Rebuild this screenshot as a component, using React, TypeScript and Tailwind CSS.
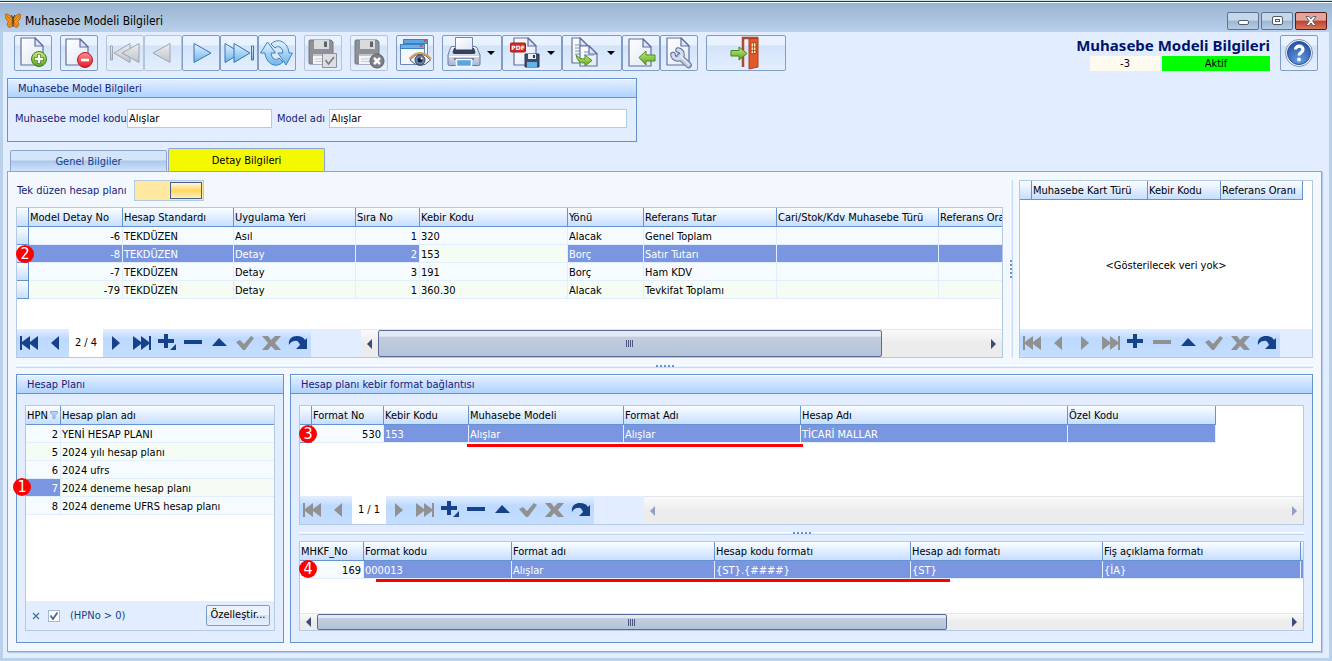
import { useState, type ReactNode } from "react";
import clsx from "clsx";

interface Column {
  title: string;
  width: number;
  align?: "right";
  indicator?: boolean;
  filter?: boolean;
}

interface Row {
  cells: string[];
  // indexes of the cells that carry the selection colour
  selected?: number[];
}

const detailColumns: Column[] = [
  { title: "", width: 12, indicator: true },
  { title: "Model Detay No", width: 94, align: "right" },
  { title: "Hesap Standardı", width: 111 },
  { title: "Uygulama Yeri", width: 122 },
  { title: "Sıra No", width: 64, align: "right" },
  { title: "Kebir Kodu", width: 148 },
  { title: "Yönü", width: 76 },
  { title: "Referans Tutar", width: 133 },
  { title: "Cari/Stok/Kdv Muhasebe Türü", width: 162 },
  { title: "Referans Oranı", width: 110 },
];

const detailRows: Row[] = [
  { cells: ["", "-6", "TEKDÜZEN", "Asıl", "1", "320", "Alacak", "Genel Toplam", "", ""] },
  { cells: ["", "-8", "TEKDÜZEN", "Detay", "2", "153", "Borç", "Satır Tutarı", "", ""], selected: [1, 2, 3, 4, 6, 7, 8, 9] },
  { cells: ["", "-7", "TEKDÜZEN", "Detay", "3", "191", "Borç", "Ham KDV", "", ""] },
  { cells: ["", "-79", "TEKDÜZEN", "Detay", "1", "360.30", "Alacak", "Tevkifat Toplamı", "", ""] },
];

const cardColumns: Column[] = [
  { title: "", width: 12, indicator: true },
  { title: "Muhasebe Kart Türü", width: 116 },
  { title: "Kebir Kodu", width: 73 },
  { title: "Referans Oranı", width: 82 },
];

const planColumns: Column[] = [
  { title: "HPN", width: 35, align: "right", filter: true },
  { title: "Hesap plan adı", width: 214 },
];

const planRows: Row[] = [
  { cells: ["2", "YENİ HESAP PLANI"] },
  { cells: ["5", "2024 yılı hesap planı"] },
  { cells: ["6", "2024 ufrs"] },
  { cells: ["7", "2024 deneme hesap planı"], selected: [0] },
  { cells: ["8", "2024 deneme UFRS hesap planı"] },
];

const linkColumns: Column[] = [
  { title: "", width: 12, indicator: true },
  { title: "Format No", width: 72, align: "right" },
  { title: "Kebir Kodu", width: 85 },
  { title: "Muhasebe Modeli", width: 155 },
  { title: "Format Adı", width: 177 },
  { title: "Hesap Adı", width: 267 },
  { title: "Özel Kodu", width: 148 },
];

const linkRows: Row[] = [
  { cells: ["", "530", "153", "Alışlar", "Alışlar", "TİCARİ MALLAR", ""], selected: [2, 3, 4, 5, 6] },
];

const formatColumns: Column[] = [
  { title: "MHKF_No", width: 64, align: "right" },
  { title: "Format kodu", width: 148 },
  { title: "Format adı", width: 203 },
  { title: "Hesap kodu formatı", width: 196 },
  { title: "Hesap adı formatı", width: 192 },
  { title: "Fiş açıklama formatı", width: 198 },
  { title: "", width: 60 },
];

const formatRows: Row[] = [
  { cells: ["169", "000013", "Alışlar", "{ST}.{####}", "{ST}", "{İA}", ""], selected: [1, 2, 3, 4, 5, 6] },
];

const HEADER_BG = "bg-linear-to-b from-[#fbfdff] to-[#c6deff]";

function DataTable({ label, columns, rows }: { label: string; columns: Column[]; rows: Row[] }) {
  const total = columns.reduce((sum, c) => sum + c.width, 0);

  return (
    <table aria-label={label} className="table-fixed border-separate border-spacing-0" style={{ width: total }}>
      <colgroup>
        {columns.map((c, i) => (
          <col key={i} style={{ width: c.width }} />
        ))}
      </colgroup>
      <thead>
        <tr>
          {columns.map((c, i) => (
            <th
              key={i}
              className={clsx(
                "h-[19px] p-0 pt-0.5 pl-px border-r border-b border-[#6593cf] text-left font-normal leading-4 whitespace-nowrap overflow-hidden",
                HEADER_BG
              )}
            >
              {c.filter ? (
                <span className="flex items-center">
                  {c.title}
                  <svg viewBox="0 0 8 8" className="w-2 h-2 ml-0.5 mb-0.5" aria-hidden="true">
                    <path d="M.5 .5h7v1.500L5 4.500v3H3v-3L.5 2z" fill="#b9d0f0" stroke="#8fabd6" />
                  </svg>
                </span>
              ) : (
                c.title
              )}
            </th>
          ))}
        </tr>
      </thead>
      <tbody>
        {rows.map((row, r) => (
          <tr key={r} className={r % 2 ? "bg-[#f5fcf3]" : "bg-[#f6fbff]"}>
            {row.cells.map((cell, i) => (
              <td
                key={i}
                className={clsx(
                  "h-[18px] p-0 pt-0.5 border-r border-b leading-[15px] whitespace-nowrap overflow-hidden",
                  columns[i].align === "right" ? "text-right pr-0.5" : "pl-px",
                  columns[i].indicator ? ["border-[#6593cf]", HEADER_BG] : "border-[#e2eeff]",
                  row.selected?.includes(i) && "bg-[#7b96e0] text-white"
                )}
              >
                {cell}
              </td>
            ))}
          </tr>
        ))}
      </tbody>
    </table>
  );
}

function Marker({ children, className }: { children: ReactNode; className: string }) {
  return (
    <span
      className={clsx(
        "absolute z-10 w-[18px] h-[18px] rounded-full bg-[#ff0000] text-white text-base leading-[18px] text-center",
        className
      )}
    >
      {children}
    </span>
  );
}

const navIcons: { label: string; path: ReactNode }[] = [
  { label: "İlk", path: <path d="M3 6h2v6l8-6v6l8-6v14l-8-6v6l-8-6v6H3z" /> },
  { label: "Önceki", path: <path d="M16 6v14l-8-7z" /> },
  { label: "Sonraki", path: <path d="M9 6v14l8-7z" /> },
  { label: "Son", path: <path d="M22 6h-2v6l-8-6v6L4 6v14l8-6v6l8-6v6h2z" /> },
  { label: "Ekle", path: <path d="M9 4h4v5h6v4h-6v5H9v-5H3V9h6z" /> },
  { label: "Sil", path: <path d="M3 10h18v4H3z" /> },
  { label: "Düzenle", path: <path d="M5 16l7-8 8 8z" /> },
  { label: "Kaydet", path: <path d="M3 12l4-2 4 4 7-8 3 2-9 12h-2z" /> },
  { label: "Vazgeç", path: <path d="M3 6h6l3 4 4-4h6l-6 7 6 7h-6l-4-4-3 4H3l6-7z" /> },
  { label: "Yenile", path: <path d="M4 15C3 9 7 6 12 6c4 0 6 1 8 4l2-2v11H11l4-4c-1-3-3-5-5-4-3 0-4 1-6 4z" /> },
];

function Navigator({ counter, disabled, corner }: { counter?: string; disabled: number[]; corner?: boolean }) {
  return (
    <div className="flex h-7 shrink-0">
      {navIcons.map((icon, i) => (
        <div key={icon.label} className="contents">
          {i === 2 && counter && <span className="w-[34px] bg-white text-center leading-7">{counter}</span>}
          <button
            aria-label={icon.label}
            disabled={disabled.includes(i)}
            className="w-[26px] h-7 flex items-center justify-center bg-linear-to-b from-[#e3efff] via-[#bdd9ff] via-35% to-[#c4deff]"
          >
            <svg viewBox="0 0 26 26" className={clsx("w-[26px] h-[26px]", disabled.includes(i) ? "fill-[#919191]" : "fill-[#15428b]")}>
              {icon.path}
              {corner && i === 4 && <path d="M21 14v6h-6z" />}
            </svg>
          </button>
        </div>
      ))}
    </div>
  );
}

function ScrollArrow({ flip, faded }: { flip?: boolean; faded?: boolean }) {
  return (
    <button aria-label={flip ? "Sağa kaydır" : "Sola kaydır"} className="w-[17px] shrink-0 flex items-center justify-center">
      <svg viewBox="0 0 5 10" className={clsx("w-[5px] h-2.5", flip && "rotate-180", faded ? "fill-[#92a0c6]" : "fill-[#3d4b75]")}>
        <path d="M5 0v10L0 5z" />
      </svg>
    </button>
  );
}

function ScrollBar({ thumb }: { thumb?: string }) {
  return (
    <div className="flex-1 flex bg-linear-to-b from-[#fafafa] to-[#ececec] to-50% border-t border-[#e3e6ea]">
      <ScrollArrow faded={!thumb} />
      <div className="flex-1 flex">
        {thumb && (
          <div
            className={clsx(
              "border border-[#5a6a96] rounded-xs flex items-center justify-center gap-px bg-linear-to-b from-[#e4eaf1] from-20% via-[#c2cedf] via-25% to-[#b4c3d8]",
              thumb
            )}
          >
            {[0, 1, 2, 3].map((n) => (
              <span key={n} className="w-px h-[7px] bg-[#4a5580]" />
            ))}
          </div>
        )}
      </div>
      <ScrollArrow flip faded={!thumb} />
    </div>
  );
}

function Splitter({ vertical }: { vertical?: boolean }) {
  return (
    <div className={clsx("shrink-0 flex items-center justify-center", vertical ? "w-4" : "h-4")}>
      <div
        className={clsx(
          "flex items-center justify-center",
          vertical
            ? "w-[3px] h-full border-l border-l-white border-r border-r-[#c3dbff] bg-[#e2eeff]"
            : "h-[3px] w-full border-t border-t-white border-b border-b-[#c3dbff] bg-[#e2eeff]"
        )}
      >
        <div className={clsx("shrink-0 flex gap-0.5", vertical ? "flex-col" : "flex-row")}>
          {[0, 1, 2, 3, 4].map((n) => (
            <span key={n} className="w-0.5 h-0.5 bg-[#6593cf]" />
          ))}
        </div>
      </div>
    </div>
  );
}

function GroupBox({ title, className, children }: { title: string; className: string; children: ReactNode }) {
  return (
    <section className={clsx("flex flex-col border border-[#6593cf] bg-[#e2eeff]", className)}>
      <h2 className="h-[19px] shrink-0 pl-2.5 border-b border-[#6593cf] border-t border-t-white bg-linear-to-b from-[#e3efff] to-[#afd2ff] leading-[17px] text-[#15217a]">
        {title}
      </h2>
      {children}
    </section>
  );
}

function ToolButton({ label, children, className = "w-[38px] justify-center", disabled, menu }: {
  label: string;
  children: ReactNode;
  className?: string;
  disabled?: boolean;
  menu?: boolean;
}) {
  return (
    <button
      aria-label={label}
      disabled={disabled}
      className={clsx(
        "h-9 shrink-0 flex items-center border rounded-xs bg-linear-to-b from-[#e9f2ff] from-25% via-[#d3e3f8] via-30% to-[#e4efff]",
        disabled ? "border-[#b3c4de]" : "border-[#7f9dc9]",
        className
      )}
    >
      <svg viewBox="0 0 38 36" className="w-[38px] h-9 shrink-0">
        {children}
      </svg>
      {menu && (
        <svg viewBox="0 0 8 4" className="w-2 h-1 ml-1.5">
          <path d="M0 0h8L4 4z" />
        </svg>
      )}
    </button>
  );
}

function Page({ x = 7, y = 3, w = 22, h = 27 }: { x?: number; y?: number; w?: number; h?: number }) {
  return (
    <g transform={`translate(${x} ${y})`} stroke="#61719f" strokeWidth="1.200" strokeLinejoin="round">
      <path d={`M0 0H${w - 8}L${w} 8V${h}H0z`} fill="url(#paper)" />
      <path d={`M${w - 8} 0V8H${w}z`} fill="#dfe7f6" />
    </g>
  );
}

function Floppy() {
  return (
    <g>
      <path d="M5 6q0-1 1-1h21l2 2v21q0 1-1 1H6q-1 0-1-1z" fill="#8e9197" stroke="#74777d" />
      <path d="M10 5h15v9H10z" fill="#d9dbde" />
      <path d="M20 6.500h3v5.500h-3z" fill="#5f6268" />
      <path d="M9 19h17v10H9z" fill="#f3f4f5" />
      <path d="M9 19h17v2H9z" fill="#c2c4c8" />
      <path d="M11 24h13M11 26.500h13" stroke="#c9cbce" />
    </g>
  );
}

function Defs() {
  return (
    <svg className="absolute w-0 h-0" aria-hidden="true">
      <defs>
        <linearGradient id="paper" x1="0" y1="0" x2="1" y2="1">
          <stop offset="0" stopColor="#fff" />
          <stop offset="1" stopColor="#dfe6f5" />
        </linearGradient>
        <linearGradient id="blue" x1="0" y1="0" x2="0" y2="1">
          <stop offset="0" stopColor="#e3f3ff" />
          <stop offset="1" stopColor="#6db4e8" />
        </linearGradient>
        <linearGradient id="grey" x1="0" y1="0" x2="0" y2="1">
          <stop offset="0" stopColor="#eceef1" />
          <stop offset="1" stopColor="#c0c4ca" />
        </linearGradient>
        <linearGradient id="green" x1="0" y1="0" x2="0" y2="1">
          <stop offset="0" stopColor="#c8ea7e" />
          <stop offset="1" stopColor="#5ba324" />
        </linearGradient>
        <linearGradient id="red" x1="0" y1="0" x2="0" y2="1">
          <stop offset="0" stopColor="#ff8f8f" />
          <stop offset="1" stopColor="#e01b24" />
        </linearGradient>
        <linearGradient id="steel" x1="0" y1="0" x2="0" y2="1">
          <stop offset="0" stopColor="#f4f7fc" />
          <stop offset="1" stopColor="#a9b7d3" />
        </linearGradient>
        <radialGradient id="help" cx="50%" cy="85%" r="80%">
          <stop offset="0" stopColor="#5f9be6" />
          <stop offset="1" stopColor="#2a55a8" />
        </radialGradient>
      </defs>
    </svg>
  );
}

function Toolbar() {
  return (
    <div role="toolbar" className="flex gap-2">
      <ToolButton label="Yeni">
        <Page />
        <circle cx="25" cy="24" r="7.500" fill="url(#green)" stroke="#3f7d1a" />
        <path d="M25 19.500v9M20.500 24h9" stroke="#3f7d1a" strokeWidth="4" />
        <path d="M25 20v8M21 24h8" stroke="#fff" strokeWidth="2.400" />
      </ToolButton>
      <ToolButton label="Sil">
        <Page x={6} y={4} h={26} />
        <circle cx="25" cy="25" r="7.500" fill="url(#red)" stroke="#c2161e" />
        <path d="M21 25h8" stroke="#fff" strokeWidth="2.600" />
      </ToolButton>

      <div className="flex">
        <ToolButton label="İlk kayıt" disabled>
          <g fill="url(#grey)" stroke="#a0a5ad" strokeLinejoin="round">
            <path d="M4.500 11h2v14h-2z" />
            <path d="M8 18L24 8.500v19z" />
            <path d="M16 18l17-9.500v19z" />
          </g>
        </ToolButton>
        <ToolButton label="Önceki kayıt" disabled>
          <path d="M9 18l17-9.500v19z" fill="url(#grey)" stroke="#a0a5ad" strokeLinejoin="round" />
        </ToolButton>
        <ToolButton label="Sonraki kayıt">
          <path d="M29 18L12 8.500v19z" fill="url(#blue)" stroke="#3a74b4" strokeLinejoin="round" />
        </ToolButton>
        <ToolButton label="Son kayıt">
          <g fill="url(#blue)" stroke="#3a74b4" strokeLinejoin="round">
            <path d="M21 18L5 8.500v19z" />
            <path d="M30 18L14 8.500v19z" />
            <path d="M31.500 11h2v14h-2z" />
          </g>
        </ToolButton>
        <ToolButton label="Yenile">
          <g fill="url(#blue)" stroke="#4583bd" strokeLinejoin="round">
            <path d="M13 9C20 2 30 7 31 18h3.500L28 30l-8-12h5C24.500 12 20 10 17 13z" />
            <path d="M25 27C18 34 8 29 7 18H2.500L9.500 7l8 11h-4.500C13.500 24 18 26 21 23z" />
          </g>
        </ToolButton>
      </div>

      <ToolButton label="Kaydet" disabled>
        <Floppy />
        <path d="M18.500 18.500h14v14h-14z" fill="#dcdee1" stroke="#8e9197" />
        <path d="M21.500 25l3 4 5.500-7" fill="none" stroke="#74777d" strokeWidth="1.500" />
      </ToolButton>
      <ToolButton label="Vazgeç" disabled>
        <Floppy />
        <circle cx="27" cy="26" r="7" fill="#7c7f85" stroke="#5f6268" />
        <path d="M24 23l6 6M30 23l-6 6" stroke="#fff" strokeWidth="2.500" />
      </ToolButton>
      <ToolButton label="Önizleme">
        <path d="M7.500 4.500h24v17h-24z" fill="#f4f8fd" stroke="#6c86b5" />
        <path d="M7.500 4.500h24v4h-24z" fill="#5fa5e0" stroke="#3d7fc0" />
        <path d="M4.500 9.500h24v20h-24z" fill="#f4f8fd" stroke="#6c86b5" />
        <path d="M4.500 9.500h24v4h-24z" fill="#6fb2e8" stroke="#3d7fc0" />
        <path d="M24 11h2.500M28 6h2.500" stroke="#e23b2e" strokeWidth="1.500" />
        <path d="M14 25q10-12 20.500 0-10 11-20.500 0z" fill="#f4f7fb" stroke="#4c5568" />
        <path d="M13.500 24q10.500-12 21.500 0" fill="none" stroke="#d99a5f" strokeWidth="2" />
        <circle cx="24" cy="25" r="5" fill="#6d86ad" stroke="#35425f" />
        <circle cx="24" cy="25" r="2.500" fill="#1d2638" />
        <circle cx="25.500" cy="23.500" r="1" fill="#fff" />
      </ToolButton>

      <div className="flex">
        <ToolButton label="Yazdır" className="w-[60px]" menu>
          <path d="M6.500 13q0-1.500 2-1.500h3v6h17v-6h2q2 0 2.500 1.500l3 7v9q0 1.500-1.500 1.500h-29Q4 30.500 4 29v-9z" transform="translate(1 0)" fill="url(#steel)" stroke="#66769f" />
          <path d="M12.500 2.500h17v13h-17z" fill="url(#paper)" stroke="#7484ad" />
          <path d="M11 13h1.500v1.500h17V13H31l1.500 4q0 2-2 2h-19q-2 0-2-2z" fill="#35415f" />
          <path d="M6 21.500h30" stroke="#fff" />
          <path d="M11 24h20" stroke="#4a5a85" strokeWidth="1.500" />
          <path d="M13.500 24.500h15v7h-15z" fill="#5aa6e2" stroke="#f4f8ff" strokeWidth="1.500" />
        </ToolButton>
        <ToolButton label="PDF olarak kaydet" className="w-[60px]" menu>
          <Page x={11} y={3} w={22} h={27} />
          <rect x="7.500" y="8" width="15" height="9" rx="1" fill="#d32b2b" stroke="#a31818" />
          <text x="15" y="15" fontSize="6" fontWeight="bold" fill="#fff" textAnchor="middle" fontFamily="DejaVu Sans">PDF</text>
          <path d="M22 19h14v13H22z" fill="#3c4a6b" stroke="#2b3650" />
          <path d="M25 19h8v5h-8z" fill="#e6ebf5" />
          <path d="M30 20h2v3h-2z" fill="#2b3650" />
          <path d="M24 27h10v5H24z" fill="#63b3ea" />
        </ToolButton>
        <ToolButton label="Kopyala" className="w-[60px]" menu>
          <Page x={9} y={3} w={16} h={25} />
          <path d="M12 10h7M12 13h6M12 16h5M12 19h5" stroke="#8090b8" />
          <Page x={17} y={11} w={17} h={20} />
          <path d="M21 17h6M21 20h10" stroke="#8090b8" />
          <path d="M13 20q4 5 9 4v-4l7 5.500-7 5.500v-3q-7 1-9-8z" fill="url(#green)" stroke="#4d8f1e" />
        </ToolButton>
        <ToolButton label="İçe aktar">
          <Page y={4} />
          <path d="M17 22.500l7-6.500v4h9v6h-9v4z" fill="url(#green)" stroke="#4d8f1e" strokeLinejoin="round" />
        </ToolButton>
        <ToolButton label="Ayarlar">
          <Page />
          <g fill="none" strokeLinecap="round">
            <path d="M19.500 21.500l9 8.500" stroke="#5a6b95" strokeWidth="6.500" />
            <path d="M13 19.500a4.500 4.500 0 1 0 5-4.500" stroke="#5a6b95" strokeWidth="5.500" />
            <path d="M19.500 21.500l9 8.500" stroke="#bcc8df" strokeWidth="4.500" />
            <path d="M13 19.500a4.500 4.500 0 1 0 5-4.500" stroke="#d3dcec" strokeWidth="3.500" />
            <path d="M20 21l9 8.500" stroke="#e6ecf6" strokeWidth="1.500" />
          </g>
        </ToolButton>
      </div>

      <ToolButton label="Çıkış" className="w-20 justify-center">
        <g transform="translate(-2 0)">
          <path d="M18 32V3h14v2" fill="none" stroke="#b5482a" strokeWidth="2.500" />
          <path d="M24 4l9-1v29l-9 2z" fill="#e0592b" stroke="#b33f18" />
          <path d="M26 8l5-.5v11l-5 .5z" fill="#f6e6b8" stroke="#b33f18" />
          <path d="M28.500 8v11M26 12h5M26 15.500h5" stroke="#b33f18" strokeWidth=".8" />
          <path d="M6 15.500h8V12l8 6.500-8 6.500v-4H6z" fill="url(#green)" stroke="#3f8a1c" strokeLinejoin="round" />
        </g>
      </ToolButton>
    </div>
  );
}

const captionButton = "w-8 h-[18px] border rounded-xs flex items-center justify-center";

function TitleBar() {
  return (
    <header className="h-[29px] shrink-0 pl-[5px] pr-[5px] flex items-center bg-linear-to-b from-[#98b3d1] to-[#b9d0ea]">
      <svg viewBox="0 0 16 16" className="w-4 h-4 mt-1.5" aria-hidden="true">
        <path d="M7.500 6C5 1 1 .5 .3 1.500 0 4 1 7 3.500 8.500 1.500 10 2 13 4 14.500c2 .5 3.500-2 3.500-5z" fill="#ef9420" stroke="#9c4d08" strokeWidth=".7" />
        <path d="M8.500 6C11 1 15 .5 15.700 1.500 16 4 15 7 12.500 8.500c2 1.500 1.500 4.500-.5 6-2 .5-3.500-2-3.500-5z" fill="#ef9420" stroke="#9c4d08" strokeWidth=".7" />
        <path d="M8 4v10M8 5L6 2M8 5l2-3" stroke="#4a2505" />
        <path d="M1.500 2.500L7 8M14.500 2.500L9 8M4 13l3-4M12 13L9 9" stroke="#b8610c" strokeWidth=".7" />
      </svg>
      <h1 className="pl-1 pt-1.5 text-xs leading-4">Muhasebe Modeli Bilgileri</h1>
      <div className="ml-auto pt-1.5 flex gap-0.5">
        <button aria-label="Simge durumuna küçült" className={clsx(captionButton, "border-[#5b7391] bg-linear-to-b from-[#c6d7e8] from-45% via-[#9db6d1] via-50% to-[#b5cce4]")}>
          <span className="w-[11px] h-[5px] mt-1 border border-[#4f5b6b] rounded-xs bg-white" />
        </button>
        <button aria-label="Ekranı kapla" className={clsx(captionButton, "border-[#5b7391] bg-linear-to-b from-[#c6d7e8] from-45% via-[#9db6d1] via-50% to-[#b5cce4]")}>
          <span className="w-[11px] h-[9px] border border-[#4f5b6b] rounded-xs bg-white flex items-center justify-center">
            <span className="w-[5px] h-[3px] border border-[#4f5b6b]" />
          </span>
        </button>
        <button aria-label="Kapat" className={clsx(captionButton, "border-[#5a1a1a] bg-linear-to-b from-[#e3a59b] from-45% via-[#bf3f28] via-50% to-[#d6765f]")}>
          <svg viewBox="0 0 12 10" className="w-3 h-2.5">
            <path d="M1 .5h3L6 3 8 .5h3L7.700 5 11 9.500H8L6 7 4 9.500H1L4.300 5z" fill="#fff" stroke="#4f5b6b" strokeWidth=".9" />
          </svg>
        </button>
      </div>
    </header>
  );
}

const gridFrame = "flex flex-col border border-[#b3c9e6] bg-white overflow-hidden";

export default function App() {
  const [tab, setTab] = useState<"genel" | "detay">("detay");

  return (
    <div className="min-h-screen flex flex-col bg-[#b9d1ea] text-[11px] text-black font-[Tahoma,'DejaVu_Sans_Condensed','Noto_Sans',sans-serif]">
      <Defs />
      <div className="h-[3px] shrink-0 bg-white border-t border-t-[#c5e3ea]">
        <div className="h-px bg-[#2b3a40]" />
      </div>
      <TitleBar />

      <main className="flex-1 mx-[3px] mb-[3px] flex flex-col bg-[#e2eeff]">
        <div className="pt-[3px] pl-[11px] pr-[11px] pb-[7px] flex justify-between">
          <Toolbar />
          <div className="flex gap-2.5">
            <div className="flex flex-col items-end justify-between">
              <p className="text-[15px] leading-5 font-bold text-[#00136e] font-['Noto_Sans',sans-serif]">
                Muhasebe Modeli Bilgileri
              </p>
              <div className="flex gap-0.5 text-center leading-[15px]">
                <span className="w-[70px] bg-[#fffaf0]">-3</span>
                <span className="w-[108px] bg-[#00ff00]">Aktif</span>
              </div>
            </div>
            <ToolButton label="Yardım">
              <circle cx="19" cy="18" r="13.500" fill="#eef3fb" stroke="#7f93bb" />
              <circle cx="19" cy="18" r="11.500" fill="url(#help)" stroke="#2c4f97" />
              <path d="M15.500 14.500c0-4.500 7.500-4.500 7.500 0 0 3-4 3-4 6" fill="none" stroke="#fff" strokeWidth="3.200" />
              <circle cx="19" cy="24.500" r="1.900" fill="#fff" />
            </ToolButton>
          </div>
        </div>

        <GroupBox title="Muhasebe Model Bilgileri" className="ml-1 w-[630px] h-16">
          <form className="flex items-center pl-[7px] pr-[9px] pt-[11px] text-[#15217a]">
            <label htmlFor="kod" className="w-28 shrink-0 whitespace-nowrap pt-0.5">Muhasebe model kodu</label>
            <input id="kod" defaultValue="Alışlar" className="w-[145px] h-[19px] pl-px border border-[#b3c9e6] bg-white text-black" />
            <label htmlFor="ad" className="w-[57px] shrink-0 pl-[5px] pt-0.5">Model adı</label>
            <input id="ad" defaultValue="Alışlar" className="flex-1 min-w-0 h-[19px] pl-px border border-[#b3c9e6] bg-white text-black" />
          </form>
        </GroupBox>

        <div role="tablist" className="flex items-end gap-px pl-[7px] pt-1.5">
          <button
            role="tab"
            aria-selected={tab === "genel"}
            onClick={() => setTab("genel")}
            className="w-[157px] h-[21px] pt-0.5 border border-b-0 border-[#8ba5cf] rounded-t-xs bg-linear-to-b from-[#d5e5f9] from-45% via-[#a9c8ee] via-50% to-[#cfe2fa] text-[#15428b]"
          >
            Genel Bilgiler
          </button>
          <button
            role="tab"
            aria-selected={tab === "detay"}
            onClick={() => setTab("detay")}
            className="w-[157px] h-[23px] pt-0.5 border border-b-0 border-[#8ba5cf] rounded-t-xs bg-[#f5f900]"
          >
            Detay Bilgileri
          </button>
        </div>

        <div role="tabpanel" className="flex-1 ml-1 mr-[7px] mb-1.5 p-2 flex flex-col border border-[#8ba5cf] bg-[#f3f8ff] shadow-[1px_1px_1px_#b9cbe8]">
          <div className="h-[178px] flex">
            <div className="flex-1 min-w-0 flex flex-col">
              <label className="h-[21px] mb-1.5 flex items-center text-[#15217a]">
                <span className="w-[118px] pl-px pt-0.5">Tek düzen hesap planı</span>
                <input
                  type="checkbox"
                  role="switch"
                  defaultChecked
                  className="appearance-none w-[70px] h-[21px] p-px flex justify-start checked:justify-end border border-[#b3c9e6] bg-[#ffe8a0] before:w-8 before:h-[17px] before:border before:border-[#4a5f85] before:bg-linear-to-b before:from-[#fff6dc] before:via-[#ffd65c] before:to-[#ffefc0]"
                />
              </label>
              <div className="relative flex-1 flex">
                <Marker className="left-0 top-[38px]">2</Marker>
                <div className={clsx(gridFrame, "flex-1 min-w-0")}>
                  <div className="flex-1 overflow-hidden">
                    <DataTable label="Model detayları" columns={detailColumns} rows={detailRows} />
                  </div>
                  <div className="flex bg-[#e2eeff]">
                    <Navigator counter="2 / 4" disabled={[7, 8]} corner />
                    <div className="w-[50px]" />
                    <ScrollBar thumb="w-[83%]" />
                  </div>
                </div>
              </div>
            </div>

            <Splitter vertical />

            <div className={clsx(gridFrame, "w-[294px]")}>
              <DataTable label="Kart türleri" columns={cardColumns} rows={[]} />
              <p className="flex-1 pt-1 flex items-center justify-center">&lt;Gösterilecek veri yok&gt;</p>
              <div className="bg-[#e2eeff]">
                <Navigator disabled={[0, 1, 2, 3, 5, 7, 8]} />
              </div>
            </div>
          </div>

          <Splitter />

          <div className="flex-1 flex gap-1.5">
            <GroupBox title="Hesap Planı" className="w-[268px]">
              <div className="relative flex-1 flex mx-2 my-[11px]">
                <Marker className="-left-3 top-[73px]">1</Marker>
                <div className={clsx(gridFrame, "flex-1 min-w-0")}>
                  <div className="flex-1">
                    <DataTable label="Hesap planları" columns={planColumns} rows={planRows} />
                  </div>
                  <div className="h-[29px] px-1 flex items-center bg-[#e2eeff] text-[#15428b]">
                    <button aria-label="Filtreyi temizle" className="w-3 h-3 flex items-center justify-center">
                      <svg viewBox="0 0 8 8" className="w-2 h-2">
                        <path d="M1 1l6 6M7 1L1 7" stroke="#4a6fa8" strokeWidth="1.300" />
                      </svg>
                    </button>
                    <label className="relative flex items-center gap-2.5 pl-1.5">
                      <input type="checkbox" defaultChecked className="appearance-none w-3 h-3 border border-[#a3b8d6] bg-white" />
                      <svg viewBox="0 0 8 8" className="absolute left-2 w-2 h-2 pointer-events-none">
                        <path d="M.5 3.500L3 7l4.500-6.500" fill="none" stroke="#4b6193" strokeWidth="1.800" />
                      </svg>
                      <span className="pt-0.5">(HPNo &gt; 0)</span>
                    </label>
                    <button className="ml-auto w-16 h-[21px] border border-[#7f9dc9] rounded-xs bg-linear-to-b from-[#ecf3fd] from-45% via-[#d5e3f5] via-50% to-[#e4efff] text-black">
                      Özelleştir...
                    </button>
                  </div>
                </div>
              </div>
            </GroupBox>

            <GroupBox title="Hesap planı kebir format bağlantısı" className="flex-1 min-w-0">
              <div className="flex-1 flex flex-col mx-2 my-[11px]">
                <div className="relative flex-1 flex">
                  <Marker className="left-0 top-5">3</Marker>
                  <span className="absolute left-[168px] top-[39px] w-[336px] h-[3px] bg-[#ff0000]" />
                  <div className={clsx(gridFrame, "flex-1 min-w-0")}>
                    <div className="flex-1 overflow-hidden">
                      <DataTable label="Kebir format bağlantısı" columns={linkColumns} rows={linkRows} />
                    </div>
                    <div className="flex bg-[#e2eeff]">
                      <Navigator counter="1 / 1" disabled={[0, 1, 2, 3, 7, 8]} corner />
                      <div className="w-[50px]" />
                      <ScrollBar />
                    </div>
                  </div>
                </div>

                <Splitter />

                <div className="relative h-[90px] flex">
                  <Marker className="left-0 top-[19px]">4</Marker>
                  <span className="absolute left-[77px] top-[38px] w-[574px] h-[3px] bg-[#ff0000]" />
                  <div className={clsx(gridFrame, "flex-1 min-w-0")}>
                    <div className="flex-1 overflow-hidden">
                      <DataTable label="Format kodları" columns={formatColumns} rows={formatRows} />
                    </div>
                    <div className="h-[17px] flex">
                      <ScrollBar thumb="w-[65%]" />
                    </div>
                  </div>
                </div>
              </div>
            </GroupBox>
          </div>
        </div>
      </main>
    </div>
  );
}
